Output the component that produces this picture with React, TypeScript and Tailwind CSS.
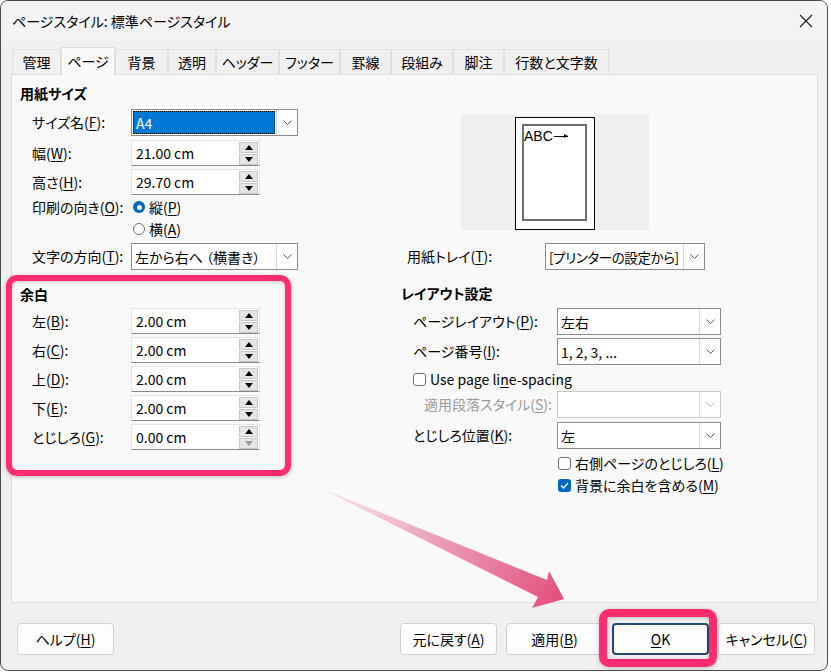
import React from "react";

const Acc = ({ k }: { k: string }) => (
  <span className="underline underline-offset-[2px] decoration-1">{k}</span>
);

const Lbl = ({ t, k, s = "):" }: { t: string; k: string; s?: string }) => (
  <>
    {t}(
    <Acc k={k} />
    {s}
  </>
);

const Chevron = ({ color = "#5a5a5a" }: { color?: string }) => (
  <svg width="9" height="5" viewBox="0 0 9 5">
    <path d="M0.5 0.5 L4.5 4.5 L8.5 0.5" fill="none" stroke={color} strokeWidth="1" />
  </svg>
);

function Select({
  className,
  value,
  disabled,
  focused,
  tight,
}: {
  className: string;
  value?: string;
  disabled?: boolean;
  focused?: boolean;
  tight?: boolean;
}) {
  return (
    <div
      className={`${className} h-[27px] flex bg-white border ${
        disabled ? "border-[#c6c6c6]" : "border-[#8b8b8b]"
      }`}
    >
      {focused ? (
        <div className="flex-1 m-[1px] bg-[#0078d7] border border-dotted border-black text-white pl-[2px] flex items-center text-[14px] leading-[18px]">
          {value}
        </div>
      ) : (
        <div
          className={`flex-1 pl-[3px] flex items-center leading-[18px] whitespace-nowrap overflow-hidden ${
            tight ? "text-[13.5px] tracking-[-0.4px]" : "text-[14px]"
          }`}
        >
          {value}
        </div>
      )}
      <div className="w-[21px] border-l border-[#d9d9d9] flex items-center justify-center">
        <Chevron color={disabled ? "#b8b8b8" : "#5a5a5a"} />
      </div>
    </div>
  );
}

const Tri = ({ up, color = "#000" }: { up?: boolean; color?: string }) => (
  <svg width="8" height="5" viewBox="0 0 8 5">
    <path d={up ? "M4 0 L8 5 L0 5Z" : "M0 0 L8 0 L4 5Z"} fill={color} />
  </svg>
);

function Spin({ value, downDisabled }: { value: string; downDisabled?: boolean }) {
  return (
    <div className="w-[129px] h-[26px] bg-white border border-[#e4e4e4] border-b-[#8a8a8a] flex items-center">
      <span className="flex-1 pl-[4px] text-[14px] leading-[18px]">{value}</span>
      <div className="flex flex-col gap-[1px] mr-[1px]">
        <div className="w-[19px] h-[11px] bg-[#e6e6e6] border border-[#c8c8c8] flex items-center justify-center">
          <Tri up />
        </div>
        <div className="w-[19px] h-[11px] bg-[#e6e6e6] border border-[#c8c8c8] flex items-center justify-center">
          <Tri color={downDisabled ? "#9a9a9a" : "#000"} />
        </div>
      </div>
    </div>
  );
}

const Radio = ({ checked }: { checked?: boolean }) =>
  checked ? (
    <div className="w-[12px] h-[12px] rounded-full bg-[#0067c0] flex items-center justify-center">
      <div className="w-[5px] h-[5px] rounded-full bg-white" />
    </div>
  ) : (
    <div className="w-[12px] h-[12px] rounded-full border border-[#6e6e6e] bg-white" />
  );

const Check = ({ checked }: { checked?: boolean }) =>
  checked ? (
    <div className="w-[13px] h-[13px] rounded-[3px] bg-[#0067c0] flex items-center justify-center">
      <svg width="9" height="7" viewBox="0 0 9 7">
        <path d="M1 3.5 L3.5 6 L8 1" fill="none" stroke="#fff" strokeWidth="1.3" />
      </svg>
    </div>
  ) : (
    <div className="w-[13px] h-[13px] rounded-[3px] border border-[#6e6e6e] bg-white" />
  );

const Btn = ({ children, focused }: { children: React.ReactNode; focused?: boolean }) => (
  <div
    className={`w-[97px] h-[32px] rounded-[4px] bg-[#fdfdfd] flex items-center justify-center text-[14px] ${
      focused ? "border-2 border-[#1e4a74]" : "border border-[#d0d0d0]"
    }`}
  >
    {children}
  </div>
);

const tabs: [string, string, boolean][] = [
  ["管理", "w-[49px]", false],
  ["ページ", "w-[54px]", true],
  ["背景", "w-[53px]", false],
  ["透明", "w-[48px]", false],
  ["ヘッダー", "w-[63px]", false],
  ["フッター", "w-[61px]", false],
  ["罫線", "w-[51px]", false],
  ["段組み", "w-[62px]", false],
  ["脚注", "w-[51px]", false],
  ["行数と文字数", "w-[105px]", false],
];

export default function App() {
  return (
    <div className="relative w-[831px] h-[672px] bg-white overflow-hidden text-[#000] text-[14px] font-['Noto_Sans_CJK_JP','Noto_Sans',sans-serif] [font-feature-settings:'palt']">
      <div className="w-[828px] h-[671px] border border-[#4a4a4a] rounded-[8px] bg-[#f0f0f0] flex flex-col overflow-hidden">
        {/* title bar */}
        <div className="h-[40px] bg-[#f3f3f3] flex items-center justify-between pl-[11px] pr-[14px] shrink-0">
          <span className="text-[14px] leading-[18px]">ページスタイル: 標準ページスタイル</span>
          <svg width="14" height="14" viewBox="0 0 14 14">
            <path d="M1 1 L13 13 M13 1 L1 13" stroke="#1a1a1a" strokeWidth="1.1" />
          </svg>
        </div>
        {/* tabs */}
        <div className="mt-[6px] ml-[11px] h-[27px] flex items-end shrink-0 relative z-10">
          {tabs.map(([t, w, active]) =>
            active ? (
              <div
                key={t}
                className={`${w} h-[28px] -mb-[1px] bg-[#f9f9f9] border border-b-0 border-[#dedede] flex items-center justify-center`}
              >
                {t}
              </div>
            ) : (
              <div
                key={t}
                className={`${w} h-[25px] bg-[#f0f0f0] border border-b-0 border-[#e0e0e0] flex items-center justify-center`}
              >
                {t}
              </div>
            )
          )}
        </div>
        {/* panel */}
        <div className="ml-[10px] w-[807px] h-[529px] bg-[#f9f9f9] border border-[#dedede] shrink-0 flex flex-col">
          {/* top section */}
          <div className="flex">
            <div className="w-[378px] pl-[8px] flex flex-col">
              <div className="mt-[9px] h-[18px] leading-[18px] font-bold">用紙サイズ</div>
              <div className="mt-[7px] pl-[12px] flex items-center">
                <span className="w-[99px] shrink-0">
                  <Lbl t="サイズ名" k="F" />
                </span>
                <Select className="w-[167px]" value="A4" focused />
              </div>
              <div className="mt-[4px] pl-[12px] flex items-center">
                <span className="w-[99px] shrink-0">
                  <Lbl t="幅" k="W" />
                </span>
                <Spin value="21.00 cm" />
              </div>
              <div className="mt-[3px] pl-[12px] flex items-center">
                <span className="w-[99px] shrink-0">
                  <Lbl t="高さ" k="H" />
                </span>
                <Spin value="29.70 cm" />
              </div>
              <div className="mt-[2px] h-[20px] pl-[12px] flex items-center">
                <span className="w-[101px] shrink-0">
                  <Lbl t="印刷の向き" k="O" />
                </span>
                <Radio checked />
                <span className="ml-[4px]">
                  <Lbl t="縦" k="P" s=")" />
                </span>
              </div>
              <div className="mt-[2px] h-[20px] pl-[113px] flex items-center">
                <Radio />
                <span className="ml-[4px]">
                  <Lbl t="横" k="A" s=")" />
                </span>
              </div>
              <div className="mt-[4px] pl-[12px] flex items-center">
                <span className="w-[99px] shrink-0">
                  <Lbl t="文字の方向" k="T" />
                </span>
                <Select className="w-[167px]" value="左から右へ （横書き）" />
              </div>
            </div>
            <div className="flex-1 flex flex-col">
              <div className="mt-[40px] ml-[71px] w-[188px] h-[115px] bg-[#efefef] flex justify-center">
                <div className="mt-[2px] w-[80px] h-[113px] border border-black bg-white pt-[6px] pl-[6px]">
                  <div className="w-[65px] h-[97px] border-2 border-[#6d6d6d] bg-white">
                    <div className="mt-[2px] flex items-center font-normal leading-[16px]">
                      <span className="text-[14px] font-['Liberation_Sans',sans-serif]">ABC</span>
                      <span className="w-[14px] h-[1px] bg-black ml-[1px] relative">
                        <span className="absolute right-0 -top-[2px] w-0 h-0 border-y-[2.5px] border-y-transparent border-l-[4px] border-l-black" />
                      </span>
                    </div>
                  </div>
                </div>
              </div>
              <div className="mt-[13px] flex items-center">
                <span className="ml-[17px] w-[138px] shrink-0">
                  <Lbl t="用紙トレイ" k="T" />
                </span>
                <Select className="w-[160px]" value="[プリンターの設定から]" tight />
              </div>
            </div>
          </div>
          {/* bottom section */}
          <div className="flex">
            <div className="w-[378px] pl-[8px] flex flex-col">
              <div className="mt-[15px] h-[18px] leading-[18px] font-bold">余白</div>
              {[
                ["左", "B", "2.00 cm"],
                ["右", "C", "2.00 cm"],
                ["上", "D", "2.00 cm"],
                ["下", "E", "2.00 cm"],
                ["とじしろ", "G", "0.00 cm"],
              ].map(([t, k, v], i) => (
                <div key={k} className={`${i === 0 ? "mt-[5px]" : "mt-[3px]"} pl-[12px] flex items-center`}>
                  <span className="w-[99px] shrink-0">
                    <Lbl t={t} k={k} />
                  </span>
                  <Spin value={v} downDisabled={k === "G"} />
                </div>
              ))}
            </div>
            <div className="flex-1 flex flex-col pl-[11px]">
              <div className="mt-[14px] h-[18px] leading-[18px] font-bold">レイアウト設定</div>
              <div className="mt-[6px] pl-[12px] flex items-center">
                <span className="w-[144px] shrink-0">
                  <Lbl t="ページレイアウト" k="P" />
                </span>
                <Select className="w-[164px]" value="左右" />
              </div>
              <div className="mt-[3px] pl-[12px] flex items-center">
                <span className="w-[144px] shrink-0">
                  <Lbl t="ページ番号" k="I" />
                </span>
                <Select className="w-[164px]" value="1, 2, 3, ..." />
              </div>
              <div className="mt-[4px] h-[20px] pl-[12px] flex items-center">
                <Check />
                <span className="ml-[4px]">
                  Use page li<Acc k="n" />e-spacing
                </span>
              </div>
              <div className="mt-[2px] pl-[23px] flex items-center">
                <span className="w-[133px] shrink-0 text-[#9a9a9a]">
                  <Lbl t="適用段落スタイル" k="S" />
                </span>
                <Select className="w-[164px]" value="" disabled />
              </div>
              <div className="mt-[4px] pl-[12px] flex items-center">
                <span className="w-[144px] shrink-0">
                  <Lbl t="とじしろ位置" k="K" />
                </span>
                <Select className="w-[164px]" value="左" />
              </div>
              <div className="mt-[4px] h-[20px] pl-[157px] flex items-center">
                <Check />
                <span className="ml-[4px]">
                  <Lbl t="右側ページのとじしろ" k="L" s=")" />
                </span>
              </div>
              <div className="mt-[2px] h-[20px] pl-[157px] flex items-center">
                <Check checked />
                <span className="ml-[4px]">
                  <Lbl t="背景に余白を含める" k="M" s=")" />
                </span>
              </div>
            </div>
          </div>
        </div>
        {/* buttons */}
        <div className="mt-[20px] pl-[16px] pr-[12px] flex items-center justify-between">
          <Btn>
            <Lbl t="ヘルプ" k="H" s=")" />
          </Btn>
          <div className="flex gap-[9px]">
            <Btn>
              <Lbl t="元に戻す" k="A" s=")" />
            </Btn>
            <Btn>
              <Lbl t="適用" k="B" s=")" />
            </Btn>
            <Btn focused>
              <Acc k="O" />K
            </Btn>
            <Btn>
              <Lbl t="キャンセル" k="C" s=")" />
            </Btn>
          </div>
        </div>
      </div>

      {/* annotation overlays */}
      <div className="absolute left-[6px] top-[275px] w-[285px] h-[201px] border-[6px] border-[#ff2d6f] rounded-[11px] shadow-[0_1px_4px_rgba(0,0,0,0.25),inset_0_1px_4px_rgba(0,0,0,0.2)] pointer-events-none" />
      <div className="absolute left-[599px] top-[609px] w-[118px] h-[58px] border-[8px] border-[#ff2d6f] rounded-[10px] shadow-[0_1px_4px_rgba(0,0,0,0.25),inset_0_1px_4px_rgba(0,0,0,0.2)] pointer-events-none" />
      <svg className="absolute left-0 top-0 pointer-events-none" width="831" height="672" viewBox="0 0 831 672">
        <defs>
          <linearGradient id="ag" x1="318" y1="487" x2="560" y2="600" gradientUnits="userSpaceOnUse">
            <stop offset="0" stopColor="#f4c4d4" stopOpacity="0.4" />
            <stop offset="0.5" stopColor="#e990b0" stopOpacity="0.9" />
            <stop offset="1" stopColor="#e4507c" />
          </linearGradient>
        </defs>
        <polygon points="318,487 547,580 549,571 564,599 532,608 538,597" fill="url(#ag)" />
      </svg>
    </div>
  );
}
